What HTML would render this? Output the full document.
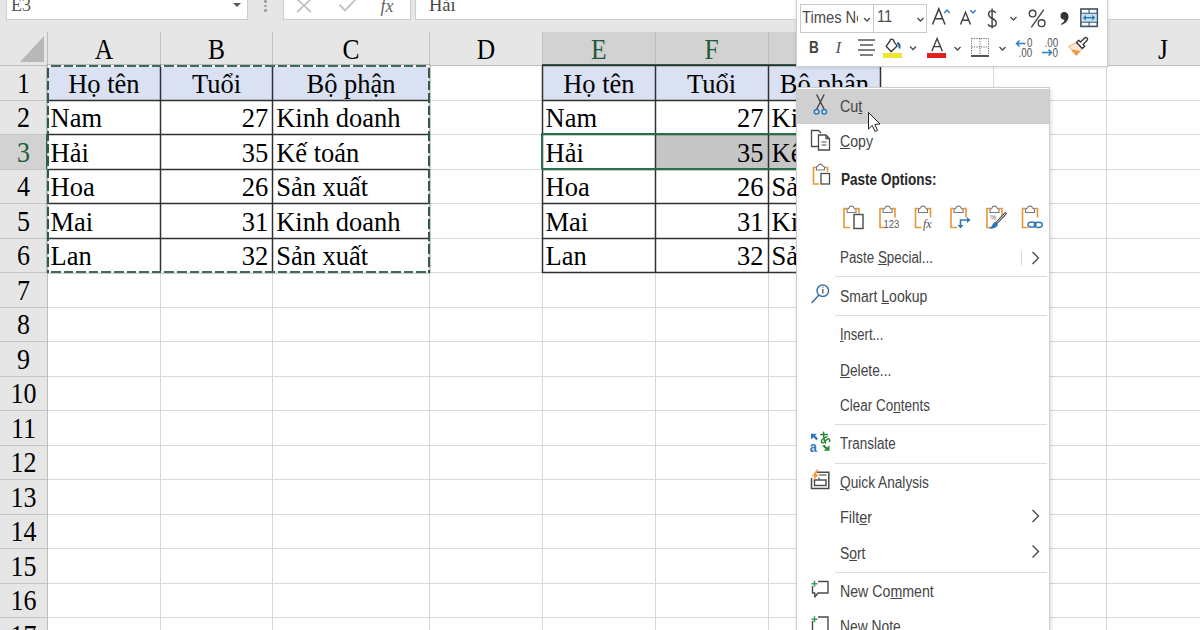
<!DOCTYPE html><html><head><meta charset="utf-8"><style>html,body{margin:0;padding:0;width:1200px;height:630px;overflow:hidden;background:#fff;}body>div,#m div,#tb div{position:absolute;}</style></head><body>
<div style="left:0px;top:0px;width:1200px;height:65px;background:#e6e6e6;"></div>
<div style="left:0px;top:65px;width:47px;height:565px;background:#e6e6e6;"></div>
<div style="left:160px;top:65px;width:1px;height:565px;background:#d9d9d9;"></div>
<div style="left:272px;top:65px;width:1px;height:565px;background:#d9d9d9;"></div>
<div style="left:429px;top:65px;width:1px;height:565px;background:#d9d9d9;"></div>
<div style="left:542px;top:65px;width:1px;height:565px;background:#d9d9d9;"></div>
<div style="left:655px;top:65px;width:1px;height:565px;background:#d9d9d9;"></div>
<div style="left:768px;top:65px;width:1px;height:565px;background:#d9d9d9;"></div>
<div style="left:880px;top:65px;width:1px;height:565px;background:#d9d9d9;"></div>
<div style="left:993px;top:65px;width:1px;height:565px;background:#d9d9d9;"></div>
<div style="left:1106px;top:65px;width:1px;height:565px;background:#d9d9d9;"></div>
<div style="left:1219px;top:65px;width:1px;height:565px;background:#d9d9d9;"></div>
<div style="left:47px;top:100px;width:1153px;height:1px;background:#d9d9d9;"></div>
<div style="left:47px;top:134px;width:1153px;height:1px;background:#d9d9d9;"></div>
<div style="left:47px;top:169px;width:1153px;height:1px;background:#d9d9d9;"></div>
<div style="left:47px;top:203px;width:1153px;height:1px;background:#d9d9d9;"></div>
<div style="left:47px;top:238px;width:1153px;height:1px;background:#d9d9d9;"></div>
<div style="left:47px;top:272px;width:1153px;height:1px;background:#d9d9d9;"></div>
<div style="left:47px;top:307px;width:1153px;height:1px;background:#d9d9d9;"></div>
<div style="left:47px;top:341px;width:1153px;height:1px;background:#d9d9d9;"></div>
<div style="left:47px;top:376px;width:1153px;height:1px;background:#d9d9d9;"></div>
<div style="left:47px;top:410px;width:1153px;height:1px;background:#d9d9d9;"></div>
<div style="left:47px;top:445px;width:1153px;height:1px;background:#d9d9d9;"></div>
<div style="left:47px;top:479px;width:1153px;height:1px;background:#d9d9d9;"></div>
<div style="left:47px;top:514px;width:1153px;height:1px;background:#d9d9d9;"></div>
<div style="left:47px;top:548px;width:1153px;height:1px;background:#d9d9d9;"></div>
<div style="left:47px;top:583px;width:1153px;height:1px;background:#d9d9d9;"></div>
<div style="left:47px;top:617px;width:1153px;height:1px;background:#d9d9d9;"></div>
<div style="left:160px;top:32px;width:1px;height:33px;background:#c4c4c4;"></div>
<div style="left:272px;top:32px;width:1px;height:33px;background:#c4c4c4;"></div>
<div style="left:429px;top:32px;width:1px;height:33px;background:#c4c4c4;"></div>
<div style="left:542px;top:32px;width:1px;height:33px;background:#c4c4c4;"></div>
<div style="left:655px;top:32px;width:1px;height:33px;background:#c4c4c4;"></div>
<div style="left:768px;top:32px;width:1px;height:33px;background:#c4c4c4;"></div>
<div style="left:880px;top:32px;width:1px;height:33px;background:#c4c4c4;"></div>
<div style="left:993px;top:32px;width:1px;height:33px;background:#c4c4c4;"></div>
<div style="left:1106px;top:32px;width:1px;height:33px;background:#c4c4c4;"></div>
<div style="left:1219px;top:32px;width:1px;height:33px;background:#c4c4c4;"></div>
<div style="left:0px;top:100px;width:47px;height:1px;background:#c4c4c4;"></div>
<div style="left:0px;top:134px;width:47px;height:1px;background:#c4c4c4;"></div>
<div style="left:0px;top:169px;width:47px;height:1px;background:#c4c4c4;"></div>
<div style="left:0px;top:203px;width:47px;height:1px;background:#c4c4c4;"></div>
<div style="left:0px;top:238px;width:47px;height:1px;background:#c4c4c4;"></div>
<div style="left:0px;top:272px;width:47px;height:1px;background:#c4c4c4;"></div>
<div style="left:0px;top:307px;width:47px;height:1px;background:#c4c4c4;"></div>
<div style="left:0px;top:341px;width:47px;height:1px;background:#c4c4c4;"></div>
<div style="left:0px;top:376px;width:47px;height:1px;background:#c4c4c4;"></div>
<div style="left:0px;top:410px;width:47px;height:1px;background:#c4c4c4;"></div>
<div style="left:0px;top:445px;width:47px;height:1px;background:#c4c4c4;"></div>
<div style="left:0px;top:479px;width:47px;height:1px;background:#c4c4c4;"></div>
<div style="left:0px;top:514px;width:47px;height:1px;background:#c4c4c4;"></div>
<div style="left:0px;top:548px;width:47px;height:1px;background:#c4c4c4;"></div>
<div style="left:0px;top:583px;width:47px;height:1px;background:#c4c4c4;"></div>
<div style="left:0px;top:617px;width:47px;height:1px;background:#c4c4c4;"></div>
<div style="left:0px;top:65px;width:1200px;height:1px;background:#bdbdbd;"></div>
<div style="left:47px;top:32px;width:1px;height:598px;background:#bdbdbd;"></div>
<div style="left:543px;top:32px;width:338px;height:33px;background:#d2d2d2;"></div>
<div style="left:655px;top:32px;width:1px;height:33px;background:#bdbdbd;"></div>
<div style="left:768px;top:32px;width:1px;height:33px;background:#bdbdbd;"></div>
<div style="left:542px;top:64px;width:339px;height:2px;background:#286e4b;"></div>
<div style="left:0px;top:135px;width:46px;height:34px;background:#d2d2d2;"></div>
<div style="left:46px;top:134px;width:2px;height:35px;background:#286e4b;"></div>
<svg style="position:absolute;left:0;top:0" width="48" height="66"><polygon points="20,62 44,62 44,36" fill="#b8b8b8"/></svg>
<div style="left:-196.10px;top:37.84px;width:600px;height:25.5px;line-height:25.5px;font-family:'Liberation Serif', serif;font-size:25.5px;text-align:center;color:#000;font-weight:normal;white-space:nowrap;transform:scale(1.0,1.12);transform-origin:300.0px 21.16px;">A</div>
<div style="left:-83.50px;top:37.84px;width:600px;height:25.5px;line-height:25.5px;font-family:'Liberation Serif', serif;font-size:25.5px;text-align:center;color:#000;font-weight:normal;white-space:nowrap;transform:scale(1.0,1.12);transform-origin:300.0px 21.16px;">B</div>
<div style="left:51.00px;top:37.84px;width:600px;height:25.5px;line-height:25.5px;font-family:'Liberation Serif', serif;font-size:25.5px;text-align:center;color:#000;font-weight:normal;white-space:nowrap;transform:scale(1.0,1.12);transform-origin:300.0px 21.16px;">C</div>
<div style="left:185.90px;top:37.84px;width:600px;height:25.5px;line-height:25.5px;font-family:'Liberation Serif', serif;font-size:25.5px;text-align:center;color:#000;font-weight:normal;white-space:nowrap;transform:scale(1.0,1.12);transform-origin:300.0px 21.16px;">D</div>
<div style="left:298.85px;top:37.84px;width:600px;height:25.5px;line-height:25.5px;font-family:'Liberation Serif', serif;font-size:25.5px;text-align:center;color:#1e5a3b;font-weight:normal;white-space:nowrap;transform:scale(1.0,1.12);transform-origin:300.0px 21.16px;">E</div>
<div style="left:411.60px;top:37.84px;width:600px;height:25.5px;line-height:25.5px;font-family:'Liberation Serif', serif;font-size:25.5px;text-align:center;color:#1e5a3b;font-weight:normal;white-space:nowrap;transform:scale(1.0,1.12);transform-origin:300.0px 21.16px;">F</div>
<div style="left:524.40px;top:37.84px;width:600px;height:25.5px;line-height:25.5px;font-family:'Liberation Serif', serif;font-size:25.5px;text-align:center;color:#1e5a3b;font-weight:normal;white-space:nowrap;transform:scale(1.0,1.12);transform-origin:300.0px 21.16px;">G</div>
<div style="left:637.20px;top:37.84px;width:600px;height:25.5px;line-height:25.5px;font-family:'Liberation Serif', serif;font-size:25.5px;text-align:center;color:#000;font-weight:normal;white-space:nowrap;transform:scale(1.0,1.12);transform-origin:300.0px 21.16px;">H</div>
<div style="left:750.05px;top:37.84px;width:600px;height:25.5px;line-height:25.5px;font-family:'Liberation Serif', serif;font-size:25.5px;text-align:center;color:#000;font-weight:normal;white-space:nowrap;transform:scale(1.0,1.12);transform-origin:300.0px 21.16px;">I</div>
<div style="left:862.90px;top:37.84px;width:600px;height:25.5px;line-height:25.5px;font-family:'Liberation Serif', serif;font-size:25.5px;text-align:center;color:#000;font-weight:normal;white-space:nowrap;transform:scale(1.0,1.12);transform-origin:300.0px 21.16px;">J</div>
<div style="left:-276.60px;top:71.62px;width:600px;height:26px;line-height:26px;font-family:'Liberation Serif', serif;font-size:26px;text-align:center;color:#000;font-weight:normal;white-space:nowrap;transform:scale(1.0,1.1);transform-origin:300.0px 21.58px;">1</div>
<div style="left:-276.60px;top:106.12px;width:600px;height:26px;line-height:26px;font-family:'Liberation Serif', serif;font-size:26px;text-align:center;color:#000;font-weight:normal;white-space:nowrap;transform:scale(1.0,1.1);transform-origin:300.0px 21.58px;">2</div>
<div style="left:-276.60px;top:140.62px;width:600px;height:26px;line-height:26px;font-family:'Liberation Serif', serif;font-size:26px;text-align:center;color:#1e5a3b;font-weight:normal;white-space:nowrap;transform:scale(1.0,1.1);transform-origin:300.0px 21.58px;">3</div>
<div style="left:-276.60px;top:175.12px;width:600px;height:26px;line-height:26px;font-family:'Liberation Serif', serif;font-size:26px;text-align:center;color:#000;font-weight:normal;white-space:nowrap;transform:scale(1.0,1.1);transform-origin:300.0px 21.58px;">4</div>
<div style="left:-276.60px;top:209.62px;width:600px;height:26px;line-height:26px;font-family:'Liberation Serif', serif;font-size:26px;text-align:center;color:#000;font-weight:normal;white-space:nowrap;transform:scale(1.0,1.1);transform-origin:300.0px 21.58px;">5</div>
<div style="left:-276.60px;top:244.12px;width:600px;height:26px;line-height:26px;font-family:'Liberation Serif', serif;font-size:26px;text-align:center;color:#000;font-weight:normal;white-space:nowrap;transform:scale(1.0,1.1);transform-origin:300.0px 21.58px;">6</div>
<div style="left:-276.60px;top:278.62px;width:600px;height:26px;line-height:26px;font-family:'Liberation Serif', serif;font-size:26px;text-align:center;color:#000;font-weight:normal;white-space:nowrap;transform:scale(1.0,1.1);transform-origin:300.0px 21.58px;">7</div>
<div style="left:-276.60px;top:313.12px;width:600px;height:26px;line-height:26px;font-family:'Liberation Serif', serif;font-size:26px;text-align:center;color:#000;font-weight:normal;white-space:nowrap;transform:scale(1.0,1.1);transform-origin:300.0px 21.58px;">8</div>
<div style="left:-276.60px;top:347.62px;width:600px;height:26px;line-height:26px;font-family:'Liberation Serif', serif;font-size:26px;text-align:center;color:#000;font-weight:normal;white-space:nowrap;transform:scale(1.0,1.1);transform-origin:300.0px 21.58px;">9</div>
<div style="left:-276.60px;top:382.12px;width:600px;height:26px;line-height:26px;font-family:'Liberation Serif', serif;font-size:26px;text-align:center;color:#000;font-weight:normal;white-space:nowrap;transform:scale(1.0,1.1);transform-origin:300.0px 21.58px;">10</div>
<div style="left:-276.60px;top:416.62px;width:600px;height:26px;line-height:26px;font-family:'Liberation Serif', serif;font-size:26px;text-align:center;color:#000;font-weight:normal;white-space:nowrap;transform:scale(1.0,1.1);transform-origin:300.0px 21.58px;">11</div>
<div style="left:-276.60px;top:451.12px;width:600px;height:26px;line-height:26px;font-family:'Liberation Serif', serif;font-size:26px;text-align:center;color:#000;font-weight:normal;white-space:nowrap;transform:scale(1.0,1.1);transform-origin:300.0px 21.58px;">12</div>
<div style="left:-276.60px;top:485.62px;width:600px;height:26px;line-height:26px;font-family:'Liberation Serif', serif;font-size:26px;text-align:center;color:#000;font-weight:normal;white-space:nowrap;transform:scale(1.0,1.1);transform-origin:300.0px 21.58px;">13</div>
<div style="left:-276.60px;top:520.12px;width:600px;height:26px;line-height:26px;font-family:'Liberation Serif', serif;font-size:26px;text-align:center;color:#000;font-weight:normal;white-space:nowrap;transform:scale(1.0,1.1);transform-origin:300.0px 21.58px;">14</div>
<div style="left:-276.60px;top:554.62px;width:600px;height:26px;line-height:26px;font-family:'Liberation Serif', serif;font-size:26px;text-align:center;color:#000;font-weight:normal;white-space:nowrap;transform:scale(1.0,1.1);transform-origin:300.0px 21.58px;">15</div>
<div style="left:-276.60px;top:589.12px;width:600px;height:26px;line-height:26px;font-family:'Liberation Serif', serif;font-size:26px;text-align:center;color:#000;font-weight:normal;white-space:nowrap;transform:scale(1.0,1.1);transform-origin:300.0px 21.58px;">16</div>
<div style="left:-276.60px;top:623.62px;width:600px;height:26px;line-height:26px;font-family:'Liberation Serif', serif;font-size:26px;text-align:center;color:#000;font-weight:normal;white-space:nowrap;transform:scale(1.0,1.1);transform-origin:300.0px 21.58px;">17</div>
<div style="left:47px;top:65px;width:382px;height:35px;background:#d9e1f2;"></div>
<svg style="position:absolute;left:0;top:0" width="1200" height="630"><g stroke="#303030" stroke-width="1.5" fill="none"><path d="M47.5,65.5 V273.0" /><path d="M160.5,65.5 V273.0" /><path d="M272.5,65.5 V273.0" /><path d="M429.5,65.5 V273.0" /><path d="M47,65.5 H430" /><path d="M47,100.5 H430" /><path d="M47,134.5 H430" /><path d="M47,169.5 H430" /><path d="M47,203.5 H430" /><path d="M47,238.5 H430" /><path d="M47,272.5 H430" /></g></svg>
<div style="left:-196.10px;top:70.50px;width:600px;height:26.5px;line-height:26.5px;font-family:'Liberation Serif', serif;font-size:26.5px;text-align:center;color:#000;font-weight:normal;white-space:nowrap;transform:scale(1.0,1.06);transform-origin:300.0px 21.99px;">Họ tên</div>
<div style="left:-83.50px;top:70.50px;width:600px;height:26.5px;line-height:26.5px;font-family:'Liberation Serif', serif;font-size:26.5px;text-align:center;color:#000;font-weight:normal;white-space:nowrap;transform:scale(1.0,1.06);transform-origin:300.0px 21.99px;">Tuổi</div>
<div style="left:51.00px;top:70.50px;width:600px;height:26.5px;line-height:26.5px;font-family:'Liberation Serif', serif;font-size:26.5px;text-align:center;color:#000;font-weight:normal;white-space:nowrap;transform:scale(1.0,1.06);transform-origin:300.0px 21.99px;">Bộ phận</div>
<div style="left:50.50px;top:105.00px;width:600px;height:26.5px;line-height:26.5px;font-family:'Liberation Serif', serif;font-size:26.5px;text-align:left;color:#000;font-weight:normal;white-space:nowrap;transform:scale(1.0,1.06);transform-origin:0px 21.99px;">Nam</div>
<div style="left:-331.80px;top:105.00px;width:600px;height:26.5px;line-height:26.5px;font-family:'Liberation Serif', serif;font-size:26.5px;text-align:right;color:#000;font-weight:normal;white-space:nowrap;transform:scale(1.0,1.06);transform-origin:600px 21.99px;">27</div>
<div style="left:276.20px;top:105.00px;width:600px;height:26.5px;line-height:26.5px;font-family:'Liberation Serif', serif;font-size:26.5px;text-align:left;color:#000;font-weight:normal;white-space:nowrap;transform:scale(1.0,1.06);transform-origin:0px 21.99px;">Kinh doanh</div>
<div style="left:50.50px;top:139.50px;width:600px;height:26.5px;line-height:26.5px;font-family:'Liberation Serif', serif;font-size:26.5px;text-align:left;color:#000;font-weight:normal;white-space:nowrap;transform:scale(1.0,1.06);transform-origin:0px 21.99px;">Hải</div>
<div style="left:-331.80px;top:139.50px;width:600px;height:26.5px;line-height:26.5px;font-family:'Liberation Serif', serif;font-size:26.5px;text-align:right;color:#000;font-weight:normal;white-space:nowrap;transform:scale(1.0,1.06);transform-origin:600px 21.99px;">35</div>
<div style="left:276.20px;top:139.50px;width:600px;height:26.5px;line-height:26.5px;font-family:'Liberation Serif', serif;font-size:26.5px;text-align:left;color:#000;font-weight:normal;white-space:nowrap;transform:scale(1.0,1.06);transform-origin:0px 21.99px;">Kế toán</div>
<div style="left:50.50px;top:174.00px;width:600px;height:26.5px;line-height:26.5px;font-family:'Liberation Serif', serif;font-size:26.5px;text-align:left;color:#000;font-weight:normal;white-space:nowrap;transform:scale(1.0,1.06);transform-origin:0px 21.99px;">Hoa</div>
<div style="left:-331.80px;top:174.00px;width:600px;height:26.5px;line-height:26.5px;font-family:'Liberation Serif', serif;font-size:26.5px;text-align:right;color:#000;font-weight:normal;white-space:nowrap;transform:scale(1.0,1.06);transform-origin:600px 21.99px;">26</div>
<div style="left:276.20px;top:174.00px;width:600px;height:26.5px;line-height:26.5px;font-family:'Liberation Serif', serif;font-size:26.5px;text-align:left;color:#000;font-weight:normal;white-space:nowrap;transform:scale(1.0,1.06);transform-origin:0px 21.99px;">Sản xuất</div>
<div style="left:50.50px;top:208.50px;width:600px;height:26.5px;line-height:26.5px;font-family:'Liberation Serif', serif;font-size:26.5px;text-align:left;color:#000;font-weight:normal;white-space:nowrap;transform:scale(1.0,1.06);transform-origin:0px 21.99px;">Mai</div>
<div style="left:-331.80px;top:208.50px;width:600px;height:26.5px;line-height:26.5px;font-family:'Liberation Serif', serif;font-size:26.5px;text-align:right;color:#000;font-weight:normal;white-space:nowrap;transform:scale(1.0,1.06);transform-origin:600px 21.99px;">31</div>
<div style="left:276.20px;top:208.50px;width:600px;height:26.5px;line-height:26.5px;font-family:'Liberation Serif', serif;font-size:26.5px;text-align:left;color:#000;font-weight:normal;white-space:nowrap;transform:scale(1.0,1.06);transform-origin:0px 21.99px;">Kinh doanh</div>
<div style="left:50.50px;top:243.00px;width:600px;height:26.5px;line-height:26.5px;font-family:'Liberation Serif', serif;font-size:26.5px;text-align:left;color:#000;font-weight:normal;white-space:nowrap;transform:scale(1.0,1.06);transform-origin:0px 21.99px;">Lan</div>
<div style="left:-331.80px;top:243.00px;width:600px;height:26.5px;line-height:26.5px;font-family:'Liberation Serif', serif;font-size:26.5px;text-align:right;color:#000;font-weight:normal;white-space:nowrap;transform:scale(1.0,1.06);transform-origin:600px 21.99px;">32</div>
<div style="left:276.20px;top:243.00px;width:600px;height:26.5px;line-height:26.5px;font-family:'Liberation Serif', serif;font-size:26.5px;text-align:left;color:#000;font-weight:normal;white-space:nowrap;transform:scale(1.0,1.06);transform-origin:0px 21.99px;">Sản xuất</div>
<div style="left:542px;top:65px;width:338px;height:35px;background:#d9e1f2;"></div>
<div style="left:656px;top:135px;width:224px;height:34px;background:#c6c6c6;"></div>
<svg style="position:absolute;left:0;top:0" width="1200" height="630"><g stroke="#303030" stroke-width="1.5" fill="none"><path d="M542.5,65.5 V273.0" /><path d="M655.5,65.5 V273.0" /><path d="M768.5,65.5 V273.0" /><path d="M880.5,65.5 V273.0" /><path d="M542,65.5 H881" /><path d="M542,100.5 H881" /><path d="M542,134.5 H881" /><path d="M542,169.5 H881" /><path d="M542,203.5 H881" /><path d="M542,238.5 H881" /><path d="M542,272.5 H881" /></g></svg>
<div style="left:298.85px;top:70.50px;width:600px;height:26.5px;line-height:26.5px;font-family:'Liberation Serif', serif;font-size:26.5px;text-align:center;color:#000;font-weight:normal;white-space:nowrap;transform:scale(1.0,1.06);transform-origin:300.0px 21.99px;">Họ tên</div>
<div style="left:411.60px;top:70.50px;width:600px;height:26.5px;line-height:26.5px;font-family:'Liberation Serif', serif;font-size:26.5px;text-align:center;color:#000;font-weight:normal;white-space:nowrap;transform:scale(1.0,1.06);transform-origin:300.0px 21.99px;">Tuổi</div>
<div style="left:524.40px;top:70.50px;width:600px;height:26.5px;line-height:26.5px;font-family:'Liberation Serif', serif;font-size:26.5px;text-align:center;color:#000;font-weight:normal;white-space:nowrap;transform:scale(1.0,1.06);transform-origin:300.0px 21.99px;">Bộ phận</div>
<div style="left:545.50px;top:105.00px;width:600px;height:26.5px;line-height:26.5px;font-family:'Liberation Serif', serif;font-size:26.5px;text-align:left;color:#000;font-weight:normal;white-space:nowrap;transform:scale(1.0,1.06);transform-origin:0px 21.99px;">Nam</div>
<div style="left:163.50px;top:105.00px;width:600px;height:26.5px;line-height:26.5px;font-family:'Liberation Serif', serif;font-size:26.5px;text-align:right;color:#000;font-weight:normal;white-space:nowrap;transform:scale(1.0,1.06);transform-origin:600px 21.99px;">27</div>
<div style="left:771.50px;top:105.00px;width:600px;height:26.5px;line-height:26.5px;font-family:'Liberation Serif', serif;font-size:26.5px;text-align:left;color:#000;font-weight:normal;white-space:nowrap;transform:scale(1.0,1.06);transform-origin:0px 21.99px;">Kinh doanh</div>
<div style="left:545.50px;top:139.50px;width:600px;height:26.5px;line-height:26.5px;font-family:'Liberation Serif', serif;font-size:26.5px;text-align:left;color:#000;font-weight:normal;white-space:nowrap;transform:scale(1.0,1.06);transform-origin:0px 21.99px;">Hải</div>
<div style="left:163.50px;top:139.50px;width:600px;height:26.5px;line-height:26.5px;font-family:'Liberation Serif', serif;font-size:26.5px;text-align:right;color:#000;font-weight:normal;white-space:nowrap;transform:scale(1.0,1.06);transform-origin:600px 21.99px;">35</div>
<div style="left:771.50px;top:139.50px;width:600px;height:26.5px;line-height:26.5px;font-family:'Liberation Serif', serif;font-size:26.5px;text-align:left;color:#000;font-weight:normal;white-space:nowrap;transform:scale(1.0,1.06);transform-origin:0px 21.99px;">Kế toán</div>
<div style="left:545.50px;top:174.00px;width:600px;height:26.5px;line-height:26.5px;font-family:'Liberation Serif', serif;font-size:26.5px;text-align:left;color:#000;font-weight:normal;white-space:nowrap;transform:scale(1.0,1.06);transform-origin:0px 21.99px;">Hoa</div>
<div style="left:163.50px;top:174.00px;width:600px;height:26.5px;line-height:26.5px;font-family:'Liberation Serif', serif;font-size:26.5px;text-align:right;color:#000;font-weight:normal;white-space:nowrap;transform:scale(1.0,1.06);transform-origin:600px 21.99px;">26</div>
<div style="left:771.50px;top:174.00px;width:600px;height:26.5px;line-height:26.5px;font-family:'Liberation Serif', serif;font-size:26.5px;text-align:left;color:#000;font-weight:normal;white-space:nowrap;transform:scale(1.0,1.06);transform-origin:0px 21.99px;">Sản xuất</div>
<div style="left:545.50px;top:208.50px;width:600px;height:26.5px;line-height:26.5px;font-family:'Liberation Serif', serif;font-size:26.5px;text-align:left;color:#000;font-weight:normal;white-space:nowrap;transform:scale(1.0,1.06);transform-origin:0px 21.99px;">Mai</div>
<div style="left:163.50px;top:208.50px;width:600px;height:26.5px;line-height:26.5px;font-family:'Liberation Serif', serif;font-size:26.5px;text-align:right;color:#000;font-weight:normal;white-space:nowrap;transform:scale(1.0,1.06);transform-origin:600px 21.99px;">31</div>
<div style="left:771.50px;top:208.50px;width:600px;height:26.5px;line-height:26.5px;font-family:'Liberation Serif', serif;font-size:26.5px;text-align:left;color:#000;font-weight:normal;white-space:nowrap;transform:scale(1.0,1.06);transform-origin:0px 21.99px;">Kinh doanh</div>
<div style="left:545.50px;top:243.00px;width:600px;height:26.5px;line-height:26.5px;font-family:'Liberation Serif', serif;font-size:26.5px;text-align:left;color:#000;font-weight:normal;white-space:nowrap;transform:scale(1.0,1.06);transform-origin:0px 21.99px;">Lan</div>
<div style="left:163.50px;top:243.00px;width:600px;height:26.5px;line-height:26.5px;font-family:'Liberation Serif', serif;font-size:26.5px;text-align:right;color:#000;font-weight:normal;white-space:nowrap;transform:scale(1.0,1.06);transform-origin:600px 21.99px;">32</div>
<div style="left:771.50px;top:243.00px;width:600px;height:26.5px;line-height:26.5px;font-family:'Liberation Serif', serif;font-size:26.5px;text-align:left;color:#000;font-weight:normal;white-space:nowrap;transform:scale(1.0,1.06);transform-origin:0px 21.99px;">Sản xuất</div>
<div style="left:542px;top:133px;width:339px;height:2px;background:#286e4b;"></div>
<div style="left:542px;top:168px;width:339px;height:2px;background:#286e4b;"></div>
<div style="left:541px;top:133px;width:2px;height:36px;background:#286e4b;"></div>
<div style="left:47.5px;top:65px;width:382px;height:1.7px;background:repeating-linear-gradient(90deg,rgba(255,255,255,0.9) 0 3px,#3f6b55 3px 12.6px);"></div>
<div style="left:47.5px;top:271.2px;width:382px;height:1.7px;background:repeating-linear-gradient(90deg,rgba(255,255,255,0.9) 0 3px,#3f6b55 3px 12.6px);"></div>
<div style="left:47px;top:65px;width:1.8px;height:208px;background:repeating-linear-gradient(180deg,rgba(255,255,255,0.7) 0 3px,#2f5c47 3px 12.6px);"></div>
<div style="left:428.3px;top:65px;width:1.7px;height:208px;background:repeating-linear-gradient(180deg,rgba(255,255,255,0.7) 0 3px,#2f5c47 3px 12.6px);"></div>
<div style="left:0px;top:0px;width:1200px;height:20px;background:#e6e6e6;"></div>
<div style="left:6px;top:-2px;width:242px;height:22px;background:#fff;border:1px solid #cdcdcd;border-top:none;box-sizing:border-box;"></div>
<svg style="position:absolute;left:232px;top:2px" width="10" height="6"><polygon points="1,1 9,1 5,5" fill="#555"/></svg>
<div style="left:11.00px;top:-3.94px;width:600px;height:18px;line-height:18px;font-family:'Liberation Serif', serif;font-size:18px;text-align:left;color:#555;font-weight:normal;white-space:nowrap;">E3</div>
<div style="left:264px;top:0px;width:2.5px;height:2.5px;background:#a0a0a0;border-radius:1px;"></div>
<div style="left:264px;top:4.5px;width:2.5px;height:2.5px;background:#a0a0a0;border-radius:1px;"></div>
<div style="left:264px;top:9px;width:2.5px;height:2.5px;background:#a0a0a0;border-radius:1px;"></div>
<div style="left:283px;top:-2px;width:128px;height:22px;background:#fff;border:1px solid #cdcdcd;border-top:none;box-sizing:border-box;"></div>
<svg style="position:absolute;left:294px;top:-3px" width="20" height="16"><path d="M3,2 L17,15 M17,2 L3,15" stroke="#c6c6c6" stroke-width="1.9" fill="none"/></svg>
<svg style="position:absolute;left:337px;top:-3px" width="22" height="16"><path d="M2.5,7.5 L8,13.5 L19.5,1.5" stroke="#c6c6c6" stroke-width="1.9" fill="none"/></svg>
<div style="left:380.50px;top:-2.94px;width:600px;height:18px;line-height:18px;font-family:'Liberation Serif', serif;font-size:18px;text-align:left;color:#666;font-weight:normal;white-space:nowrap;"><i>fx</i></div>
<div style="left:415px;top:-2px;width:800px;height:22px;background:#fff;border:1px solid #cdcdcd;border-top:none;box-sizing:border-box;"></div>
<div style="left:429.00px;top:-3.85px;width:600px;height:18.5px;line-height:18.5px;font-family:'Liberation Serif', serif;font-size:18.5px;text-align:left;color:#4a4a4a;font-weight:normal;white-space:nowrap;">Hải</div>
<div style="left:796px;top:-4px;width:312px;height:71px;background:#fff;border:1px solid #cfcfcf;box-sizing:border-box;box-shadow:0 1px 3px rgba(0,0,0,0.12);"></div>
<div style="left:800px;top:4px;width:74px;height:29px;background:#fff;border:1px solid #c9c9c9;box-sizing:border-box;"></div>
<div style="left:873px;top:4px;width:54px;height:29px;background:#fff;border:1px solid #c9c9c9;box-sizing:border-box;"></div>
<div style="left:802px;top:5px;width:56px;height:26px;overflow:hidden"><div style="left:0;top:0;height:26px;line-height:26px;font-family:'Liberation Sans', sans-serif;font-size:16px;color:#4a4a4a;white-space:nowrap;transform:scaleX(0.92);transform-origin:0 0">Times New</div></div>
<div style="left:877.00px;top:8.90px;width:600px;height:16px;line-height:16px;font-family:'Liberation Sans', sans-serif;font-size:16px;text-align:left;color:#4a4a4a;font-weight:normal;white-space:nowrap;transform:scale(0.92,1.0);transform-origin:0px 13.60px;">11</div>
<svg style="position:absolute;left:0;top:0" width="1200" height="70"><path d="M864.0,18.0 L867,21.0 L870.0,18.0" stroke="#4a4a4a" stroke-width="1.3" fill="none"/><path d="M917.5,18.0 L920.5,21.0 L923.5,18.0" stroke="#4a4a4a" stroke-width="1.3" fill="none"/><path d="M1010.5,17.0 L1013.5,20.0 L1016.5,17.0" stroke="#4a4a4a" stroke-width="1.3" fill="none"/><path d="M910.0,46.5 L913,49.5 L916.0,46.5" stroke="#4a4a4a" stroke-width="1.3" fill="none"/><path d="M954.5,47.0 L957.5,50.0 L960.5,47.0" stroke="#4a4a4a" stroke-width="1.3" fill="none"/><path d="M999.5,47.0 L1002.5,50.0 L1005.5,47.0" stroke="#4a4a4a" stroke-width="1.3" fill="none"/><path d="M932.5,24.5 L938.8,8.8 L945,24.5 M934.9,18.8 H942.7" stroke="#3f3f3f" stroke-width="1.5" fill="none"/><path d="M944.3,13 L947,10 L949.7,13" stroke="#2f7fc1" stroke-width="1.4" fill="none"/><path d="M960.5,24.6 L965.5,12.3 L970.5,24.6 M962.4,20.2 H968.6" stroke="#3f3f3f" stroke-width="1.4" fill="none"/><path d="M970.3,10.2 L973,13 L975.7,10.2" stroke="#2f7fc1" stroke-width="1.4" fill="none"/><path d="M995.8,13 C995,11.6 993.6,10.9 992,10.9 C989.8,10.9 988.6,12.4 988.6,14.4 C988.6,19.2 996.2,17.8 996.2,23 C996.2,25.2 994.6,26.6 992,26.6 C990.1,26.6 988.7,25.7 988,24.4 M992.1,8.6 V28.6" stroke="#3f3f3f" stroke-width="1.4" fill="none"/><circle cx="1032.6" cy="13.6" r="3.3" stroke="#444" stroke-width="1.4" fill="none"/><circle cx="1041.6" cy="23.2" r="3.4" stroke="#444" stroke-width="1.4" fill="none"/><path d="M1043.8,9.6 L1031.3,27.4" stroke="#444" stroke-width="1.4"/><path d="M1064,12 C1067.5,12 1068.5,14.5 1068.5,16.5 C1068.5,20.5 1065.5,23.5 1061.5,25 L1061,23.8 C1063.2,22.8 1064.5,21.2 1064.5,19.8 C1062,19.8 1060.5,18.4 1060.5,16 C1060.5,13.6 1062.2,12 1064,12 Z" fill="#333"/><rect x="1080.9" y="9" width="16.4" height="17.4" fill="#fff" stroke="#3d5266" stroke-width="1.6"/><rect x="1081.7" y="13.4" width="14.8" height="8.6" fill="#bfe2f7"/><path d="M1081,13.2 H1097.3 M1081,22.2 H1097.3 M1089.1,9 V13.2 M1089.1,22.2 V26.4" stroke="#3d5266" stroke-width="1.1"/><path d="M1084.5,17.7 H1093.7" stroke="#2f6fa8" stroke-width="1.3"/><path d="M1083,17.7 L1086,15 V20.4 Z M1095.2,17.7 L1092.2,15 V20.4 Z" fill="#2f6fa8"/><text x="809" y="52.6" font-family="Liberation Sans" font-size="16" font-weight="bold" fill="#444" transform="translate(809,52.6) scale(0.85,1) translate(-809,-52.6)">B</text><text x="835.5" y="52.6" font-family="Liberation Serif" font-size="17" font-style="italic" fill="#555">I</text><path d="M858,40 H875 M860,45 H873 M858,50 H875 M860,55 H873" stroke="#555" stroke-width="1.4"/><path d="M891.5,39.2 C890.5,39.2 890,40 890,41 L886.2,46.2 L891.2,51.8 L897.3,45.8 L894.2,42.2 C894,40.5 893,39.2 891.5,39.2 Z" fill="#fff" stroke="#333" stroke-width="1.3" stroke-linejoin="round"/><path d="M897.4,42.6 C899.4,44 900,46.2 899.4,48.6" stroke="#1e5a8a" stroke-width="1.9" fill="none"/><rect x="883" y="53" width="19" height="5" fill="#f0e632"/><path d="M931.8,51.2 L937.1,38.6 L942.4,51.2 M933.8,46.6 H940.4" stroke="#3f3f3f" stroke-width="1.4" fill="none"/><rect x="927" y="53" width="19" height="5" fill="#e21f1f"/><rect x="971.5" y="38.5" width="17" height="17" fill="none" stroke="#666" stroke-width="1" stroke-dasharray="1.2,1.2"/><path d="M980,38.5 V55.5 M971.5,47 H988.5" stroke="#666" stroke-width="1" stroke-dasharray="1.2,1.2"/><path d="M971,56 H989" stroke="#444" stroke-width="1.8"/><path d="M1016.5,43.5 H1025.5 M1019.5,40.5 L1016.5,43.5 L1019.5,46.5" stroke="#2f7fc1" stroke-width="1.5" fill="none"/><text x="1027" y="46.8" font-family="Liberation Sans" font-size="12" fill="#555" transform="translate(1027,46.8) scale(0.82,1) translate(-1027,-46.8)">0</text><text x="1018.5" y="56.6" font-family="Liberation Sans" font-size="12" fill="#555" transform="translate(1018.5,56.6) scale(0.82,1) translate(-1018.5,-56.6)">.00</text><text x="1044.5" y="46.8" font-family="Liberation Sans" font-size="12" fill="#555" transform="translate(1044.5,46.8) scale(0.82,1) translate(-1044.5,-46.8)">.00</text><path d="M1042,52.5 H1051.5 M1048.5,49.5 L1051.5,52.5 L1048.5,55.5" stroke="#2f7fc1" stroke-width="1.5" fill="none"/><text x="1052.5" y="56.6" font-family="Liberation Sans" font-size="12" fill="#555" transform="translate(1052.5,56.6) scale(0.82,1) translate(-1052.5,-56.6)">0</text><path d="M1068.5,46.5 L1076.5,42.5 L1082.2,48.5 L1076.4,55.2 Z" fill="#fde9d2" stroke="#f0b070" stroke-width="1"/><path d="M1072,50 L1079.5,51.5 L1076.4,55.2 Z" fill="#f39c3c" stroke="#ee9030" stroke-width="1"/><path d="M1076.5,42.5 L1078.8,40.3 L1080.6,42.1 L1084.6,38.1 C1085.3,37.4 1086.3,37.4 1087,38.1 C1087.7,38.8 1087.7,39.8 1087,40.5 L1083,44.5 L1084.8,46.3 L1082.3,48.6 Z" fill="#fff" stroke="#3a3a3a" stroke-width="1.4" stroke-linejoin="round"/></svg>
<div style="left:796px;top:87px;width:254px;height:560px;background:#fff;border:1px solid #cdcdcd;box-sizing:border-box;box-shadow:1px 2px 4px rgba(0,0,0,0.15);"></div>
<div style="left:797px;top:89px;width:252px;height:35px;background:#d0d0d0;"></div>
<div style="left:839.80px;top:99.14px;width:600px;height:15.6px;line-height:15.6px;font-family:'Liberation Sans', sans-serif;font-size:15.6px;text-align:left;color:#444;font-weight:normal;white-space:nowrap;transform:scale(0.918,1.0);transform-origin:0px 13.26px;">Cu<u>t</u></div>
<div style="left:839.80px;top:134.44px;width:600px;height:15.6px;line-height:15.6px;font-family:'Liberation Sans', sans-serif;font-size:15.6px;text-align:left;color:#444;font-weight:normal;white-space:nowrap;transform:scale(0.905,1.0);transform-origin:0px 13.26px;"><u>C</u>opy</div>
<div style="left:839.80px;top:250.34px;width:600px;height:15.6px;line-height:15.6px;font-family:'Liberation Sans', sans-serif;font-size:15.6px;text-align:left;color:#444;font-weight:normal;white-space:nowrap;transform:scale(0.858,1.0);transform-origin:0px 13.26px;">Paste <u>S</u>pecial...</div>
<div style="left:839.80px;top:288.74px;width:600px;height:15.6px;line-height:15.6px;font-family:'Liberation Sans', sans-serif;font-size:15.6px;text-align:left;color:#444;font-weight:normal;white-space:nowrap;transform:scale(0.899,1.0);transform-origin:0px 13.26px;">Smart <u>L</u>ookup</div>
<div style="left:839.80px;top:327.04px;width:600px;height:15.6px;line-height:15.6px;font-family:'Liberation Sans', sans-serif;font-size:15.6px;text-align:left;color:#444;font-weight:normal;white-space:nowrap;transform:scale(0.833,1.0);transform-origin:0px 13.26px;"><u>I</u>nsert...</div>
<div style="left:839.80px;top:362.74px;width:600px;height:15.6px;line-height:15.6px;font-family:'Liberation Sans', sans-serif;font-size:15.6px;text-align:left;color:#444;font-weight:normal;white-space:nowrap;transform:scale(0.883,1.0);transform-origin:0px 13.26px;"><u>D</u>elete...</div>
<div style="left:839.80px;top:397.74px;width:600px;height:15.6px;line-height:15.6px;font-family:'Liberation Sans', sans-serif;font-size:15.6px;text-align:left;color:#444;font-weight:normal;white-space:nowrap;transform:scale(0.864,1.0);transform-origin:0px 13.26px;">Clear Co<u>n</u>tents</div>
<div style="left:839.80px;top:436.34px;width:600px;height:15.6px;line-height:15.6px;font-family:'Liberation Sans', sans-serif;font-size:15.6px;text-align:left;color:#444;font-weight:normal;white-space:nowrap;transform:scale(0.864,1.0);transform-origin:0px 13.26px;">Translate</div>
<div style="left:839.80px;top:474.94px;width:600px;height:15.6px;line-height:15.6px;font-family:'Liberation Sans', sans-serif;font-size:15.6px;text-align:left;color:#444;font-weight:normal;white-space:nowrap;transform:scale(0.877,1.0);transform-origin:0px 13.26px;"><u>Q</u>uick Analysis</div>
<div style="left:839.80px;top:510.34px;width:600px;height:15.6px;line-height:15.6px;font-family:'Liberation Sans', sans-serif;font-size:15.6px;text-align:left;color:#444;font-weight:normal;white-space:nowrap;transform:scale(0.925,1.0);transform-origin:0px 13.26px;">Filt<u>e</u>r</div>
<div style="left:839.80px;top:546.24px;width:600px;height:15.6px;line-height:15.6px;font-family:'Liberation Sans', sans-serif;font-size:15.6px;text-align:left;color:#444;font-weight:normal;white-space:nowrap;transform:scale(0.89,1.0);transform-origin:0px 13.26px;">S<u>o</u>rt</div>
<div style="left:839.80px;top:584.14px;width:600px;height:15.6px;line-height:15.6px;font-family:'Liberation Sans', sans-serif;font-size:15.6px;text-align:left;color:#444;font-weight:normal;white-space:nowrap;transform:scale(0.909,1.0);transform-origin:0px 13.26px;">New Co<u>m</u>ment</div>
<div style="left:839.80px;top:619.44px;width:600px;height:15.6px;line-height:15.6px;font-family:'Liberation Sans', sans-serif;font-size:15.6px;text-align:left;color:#444;font-weight:normal;white-space:nowrap;transform:scale(0.886,1.0);transform-origin:0px 13.26px;">New <u>N</u>ote</div>
<div style="left:841.00px;top:172.04px;width:600px;height:15.6px;line-height:15.6px;font-family:'Liberation Sans', sans-serif;font-size:15.6px;text-align:left;color:#262626;font-weight:bold;white-space:nowrap;transform:scale(0.868,1.0);transform-origin:0px 13.26px;">Paste Options:</div>
<div style="left:835px;top:276px;width:212px;height:1px;background:#dcdcdc;"></div>
<div style="left:835px;top:315px;width:212px;height:1px;background:#dcdcdc;"></div>
<div style="left:835px;top:424px;width:212px;height:1px;background:#dcdcdc;"></div>
<div style="left:835px;top:463px;width:212px;height:1px;background:#dcdcdc;"></div>
<div style="left:835px;top:572px;width:212px;height:1px;background:#dcdcdc;"></div>
<div style="left:1021px;top:251px;width:1px;height:14px;background:#d4d4d4;"></div>
<svg style="position:absolute;left:0;top:0" width="1200" height="630"><path d="M816.6,94.5 L824.2,109.2 M824.2,94.5 L816.6,109.2" stroke="#3a3a3a" stroke-width="1.3" fill="none"/><circle cx="816.6" cy="111.8" r="2.3" stroke="#2f78b8" stroke-width="1.5" fill="#cfe3f3"/><circle cx="824.2" cy="111.8" r="2.3" stroke="#2f78b8" stroke-width="1.5" fill="#cfe3f3"/><path d="M818,146.5 H811.5 V130.5 H818.5 L821,133" stroke="#4a4a4a" stroke-width="1.3" fill="none"/><path d="M818.5,135 H826 L829.5,138.5 V150 H818.5 Z M826,135 V138.5 H829.5" stroke="#4a4a4a" stroke-width="1.3" fill="#fff"/><path d="M821.5,142 H826.5 M821.5,145 H826.5" stroke="#4a4a4a" stroke-width="1"/><path d="M817.5,167.5 H813.5 V184 H819" stroke="#e8963a" stroke-width="1.6" fill="none"/><path d="M824.5,167.5 H827.5 V172" stroke="#e8963a" stroke-width="1.6" fill="none"/><path d="M816.5,170 V167 L818.5,165.5 C818.8,163.6 822,163.6 822.3,165.5 L824.5,167 V170 Z" stroke="#777" stroke-width="1.1" fill="#fff"/><rect x="821" y="173.5" width="8.5" height="10.5" stroke="#4a4a4a" stroke-width="1.3" fill="#fff"/><path d="M847.5,208.5 H844 V227.5 H850" stroke="#e8963a" stroke-width="1.6" fill="none"/><path d="M855.5,208.5 H859 V213.5" stroke="#e8963a" stroke-width="1.6" fill="none"/><path d="M847,212.5 V209.5 L849,208.0 C849.5,205.5 853.5,205.5 854,208.0 L856,209.5 V212.5 Z" stroke="#7a7a7a" stroke-width="1.1" fill="#fff"/><path d="M883.5,208.5 H880 V227.5 H886" stroke="#e8963a" stroke-width="1.6" fill="none"/><path d="M891.5,208.5 H895 V217.5" stroke="#e8963a" stroke-width="1.6" fill="none"/><path d="M883,212.5 V209.5 L885,208.0 C885.5,205.5 889.5,205.5 890,208.0 L892,209.5 V212.5 Z" stroke="#7a7a7a" stroke-width="1.1" fill="#fff"/><path d="M919.0,208.5 H915.5 V227.5 H921.5" stroke="#e8963a" stroke-width="1.6" fill="none"/><path d="M927.0,208.5 H930.5 V217.5" stroke="#e8963a" stroke-width="1.6" fill="none"/><path d="M918.5,212.5 V209.5 L920.5,208.0 C921.0,205.5 925.0,205.5 925.5,208.0 L927.5,209.5 V212.5 Z" stroke="#7a7a7a" stroke-width="1.1" fill="#fff"/><path d="M954.5,208.5 H951 V227.5 H957" stroke="#e8963a" stroke-width="1.6" fill="none"/><path d="M962.5,208.5 H966 V217.5" stroke="#e8963a" stroke-width="1.6" fill="none"/><path d="M954,212.5 V209.5 L956,208.0 C956.5,205.5 960.5,205.5 961,208.0 L963,209.5 V212.5 Z" stroke="#7a7a7a" stroke-width="1.1" fill="#fff"/><path d="M990.5,208.5 H987 V227.5 H993" stroke="#e8963a" stroke-width="1.6" fill="none"/><path d="M998.5,208.5 H1002 V217.5" stroke="#e8963a" stroke-width="1.6" fill="none"/><path d="M990,212.5 V209.5 L992,208.0 C992.5,205.5 996.5,205.5 997,208.0 L999,209.5 V212.5 Z" stroke="#7a7a7a" stroke-width="1.1" fill="#fff"/><path d="M1026.0,208.5 H1022.5 V227.5 H1028.5" stroke="#e8963a" stroke-width="1.6" fill="none"/><path d="M1034.0,208.5 H1037.5 V217.5" stroke="#e8963a" stroke-width="1.6" fill="none"/><path d="M1025.5,212.5 V209.5 L1027.5,208.0 C1028.0,205.5 1032.0,205.5 1032.5,208.0 L1034.5,209.5 V212.5 Z" stroke="#7a7a7a" stroke-width="1.1" fill="#fff"/><rect x="854" y="214.5" width="9" height="14" stroke="#4a4a4a" stroke-width="1.4" fill="#fff"/><text x="883.5" y="228" font-family="Liberation Sans" font-size="10" fill="#505a66" transform="translate(883.5,228) scale(0.95,1) translate(-883.5,-228)">123</text><text x="923" y="228" font-family="Liberation Serif" font-style="italic" font-size="12" fill="#505050">fx</text><path d="M960.5,227 V220 H968.5" stroke="#2f78b8" stroke-width="1.6" fill="none"/><path d="M967,217 L970.5,220 L967,223 Z M957.5,225 L960.5,228.5 L963.5,225 Z" fill="#2f78b8"/><text x="990" y="220" font-family="Liberation Sans" font-size="7" fill="#666">%</text><path d="M1005.5,213.5 L996,223.5" stroke="#4a4a4a" stroke-width="2.6" stroke-linecap="round"/><path d="M1005.5,213.5 L996,223.5" stroke="#fff" stroke-width="0.9"/><path d="M996.5,222 C993,222 992.5,225 991.5,226.5 C990.5,227.8 989,228.3 988.5,228.5 C992,229 996,228.5 998,225 Z" fill="#2f78b8"/><ellipse cx="1032" cy="224.5" rx="4" ry="2.6" stroke="#2f78b8" stroke-width="1.5" fill="none"/><ellipse cx="1038.3" cy="224.8" rx="4" ry="2.6" stroke="#2f78b8" stroke-width="1.5" fill="none"/><circle cx="822.8" cy="290.7" r="5.8" stroke="#3d77a8" stroke-width="1.5" fill="#fff"/><path d="M818.5,295.5 L812,302.5" stroke="#3d77a8" stroke-width="1.6" stroke-linecap="round"/><path d="M822.8,289 V293.5" stroke="#6b5a4a" stroke-width="1.4"/><circle cx="822.8" cy="287.3" r="0.8" fill="#c07a3a"/><text x="809.8" y="452" font-family="Liberation Sans" font-size="15" font-weight="bold" fill="#2f78b8" transform="translate(809.8,452) scale(0.85,1) translate(-809.8,-452)">a</text><path d="M811,433.8 L816.8,433.8 L815,435.6 L818,438.6 L816.4,440.2 L813.4,437.2 L811,439.6 Z" fill="#2f78b8"/><path d="M820.8,434.6 H827.4 M823.6,432.3 C823.3,436 823.8,439.8 825.6,443.2 M827,436.6 C824.5,437.6 821.2,439.8 821.4,441.8 C821.6,443.6 824.8,442.6 826.8,439.6 C828.6,437.4 830.4,439.6 829.4,441.6" stroke="#2b8a3e" stroke-width="1.5" fill="none" stroke-linecap="round"/><path d="M829.5,450.8 L823.7,450.8 L825.5,449 L822.5,446 L824.1,444.4 L827.1,447.4 L829.5,445 Z" fill="#2b8a3e"/><path d="M817,472.2 H828.8 V488.5 H811.5 V478" stroke="#4a4a4a" stroke-width="1.5" fill="none"/><path d="M819,475 H826.5" stroke="#4a4a4a" stroke-width="1.1"/><rect x="814.5" y="480" width="11.5" height="5.5" stroke="#4a4a4a" stroke-width="1.4" fill="#fff"/><path d="M819,477.5 V480" stroke="#4a4a4a" stroke-width="1.2"/><path d="M816.5,469.8 L812,476.5 H814.8 L812.8,481.5 L818.8,474.5 H816 L818.5,469.8 Z" fill="#f29a35"/><path d="M818,581.5 H828 V593 H818 L814.8,597 V593 H812.5 V586" stroke="#4a4a4a" stroke-width="1.4" fill="none" stroke-linejoin="round"/><path d="M811.5,583.8 H817.5 M814.5,580.8 V586.8" stroke="#3a9a5a" stroke-width="1.5"/><path d="M818,617 H828 V632 M812.5,621 V632" stroke="#4a4a4a" stroke-width="1.4" fill="none"/><path d="M811.5,619.3 H817.5 M814.5,616.3 V622.3" stroke="#3a9a5a" stroke-width="1.5"/><path d="M1032.5,252 L1038.5,258 L1032.5,264" stroke="#444" stroke-width="1.3" fill="none"/><path d="M1032.5,510 L1038.5,516 L1032.5,522" stroke="#444" stroke-width="1.3" fill="none"/><path d="M1032.5,545.5 L1038.5,551.5 L1032.5,557.5" stroke="#444" stroke-width="1.3" fill="none"/><path d="M868.5,112.5 V129 L872.3,125.4 L875,131.5 L877.5,130.4 L874.9,124.4 L880,124 Z" fill="#fff" stroke="#222" stroke-width="1" stroke-linejoin="round"/></svg>
</body></html>
